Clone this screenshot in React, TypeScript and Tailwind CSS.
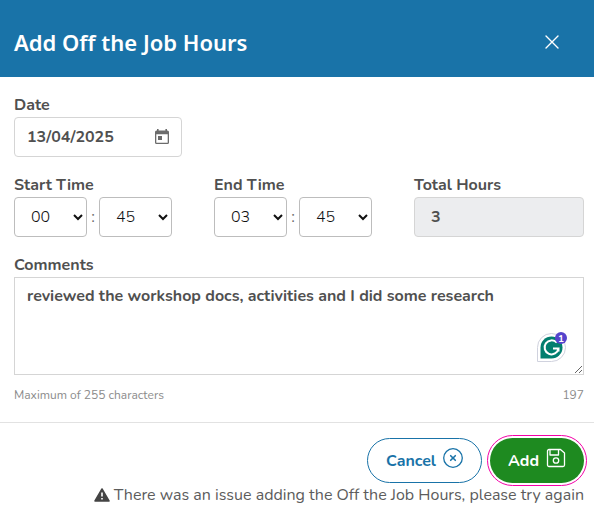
import { useState } from "react";

const FIELD = "h-10 rounded border text-base";
const LABEL = "block text-base leading-6 font-bold text-[#505050]";

function range(n: number) {
  return Array.from({ length: n }, (_, i) => String(i).padStart(2, "0"));
}

function TimeField({ label, id, hour, minute }: { label: string; id: string; hour: string; minute: string }) {
  const select = `${FIELD} w-[73px] border-[#bdbdbd] bg-white pl-3 font-light text-[#111]`;
  return (
    <div>
      <label htmlFor={id} className={LABEL}>{label}</label>
      <div className="flex items-center">
        <select id={id} defaultValue={hour} className={select}>
          {range(24).map((v) => <option key={v}>{v}</option>)}
        </select>
        <span className="w-3 text-center text-base text-[#666]">:</span>
        <select aria-label={`${label} minutes`} defaultValue={minute} className={select}>
          {range(60).map((v) => <option key={v}>{v}</option>)}
        </select>
      </div>
    </div>
  );
}

function CalendarIcon() {
  return (
    <svg viewBox="0 0 14 16" className="h-4 w-3.5" fill="#6b6b6b" aria-hidden="true">
      <path fillRule="evenodd" d="M2 0h1.600v1.600h6.800V0H12v1.600h.5A1.500 1.500 0 0 1 14 3.100v10.400a1.500 1.500 0 0 1-1.500 1.500h-11A1.500 1.500 0 0 1 0 13.500V3.100a1.500 1.500 0 0 1 1.500-1.500H2zM1.300 5.200v8.500h11.400V5.200zM3 7h4v4H3z" />
    </svg>
  );
}

function AssistantBadge() {
  return (
    <svg viewBox="0 0 32 32" className="absolute right-4 bottom-3 size-8" role="img" aria-label="1 writing suggestion">
      <path d="M1.500 30.500V16.500a14 14 0 1 1 14 14z" fill="#fff" stroke="#d0d2de" />
      <path d="M4.500 27.500V16.500a11 11 0 1 1 11 11z" fill="#027e6f" />
      <path d="M20.800 11.700A7 7 0 1 0 22.500 17.500H17M22.500 16.500V20.500" fill="none" stroke="#fff" strokeWidth="2" />
      <circle cx="25" cy="7" r="6" fill="#5543cc" />
      <text x="25" y="10.500" textAnchor="middle" fill="#fff" fontSize="10" fontWeight="700">1</text>
    </svg>
  );
}

export default function App() {
  const [date, setDate] = useState("13/04/2025");
  const [comments, setComments] = useState("reviewed the workshop docs, activities and I did some research");
  return (
    <form className="bg-white font-['Nunito','Open_Sans',sans-serif] text-[#505050]" onSubmit={(e) => e.preventDefault()}>
      <header className="flex h-[77px] items-center justify-between bg-[#1973a8] pt-1.5 pr-8 pl-3.5 text-white">
        <h1 className="font-['Noto_Sans',sans-serif] text-[22px] leading-8 font-semibold">Add Off the Job Hours</h1>
        <button type="button" aria-label="Close" className="flex size-5 items-center justify-center">
          <svg viewBox="0 0 14 14" className="size-3.5" stroke="currentColor" strokeWidth="1.4" strokeLinecap="round" aria-hidden="true">
            <path d="M1 1l12 12M13 1L1 13" />
          </svg>
        </button>
      </header>

      <div className="flex flex-col gap-4 border-b border-[#e2e2e2] pt-4 pr-2.5 pb-[17px] pl-3.5">
        <div>
          <label htmlFor="date" className={LABEL}>Date</label>
          <div className={`${FIELD} flex w-[168px] items-center border-[#d5d5d5] px-3`}>
            <input id="date" value={date} onChange={(e) => setDate(e.target.value)} className="min-w-0 flex-1 font-bold outline-none" />
            <button type="button" aria-label="Open calendar"><CalendarIcon /></button>
          </div>
        </div>
        <div className="grid grid-cols-3 gap-[30px]">
          <TimeField label="Start Time" id="start" hour="00" minute="45" />
          <TimeField label="End Time" id="end" hour="03" minute="45" />
          <div>
            <label htmlFor="total" className={LABEL}>Total Hours</label>
            <input id="total" disabled value="3" className={`${FIELD} w-full border-[#d5d5d5] bg-[#ecedef] px-4 font-bold`} />
          </div>
        </div>
        <div>
          <label htmlFor="comments" className={LABEL}>Comments</label>
          <div className="relative">
            <textarea id="comments" value={comments} onChange={(e) => setComments(e.target.value)} className="block h-[98px] w-full border border-[#d5d5d5] px-3 py-1.5 text-base leading-6 font-bold outline-none" />
            <AssistantBadge />
          </div>
          <div className="flex justify-between pt-2.5 text-xs leading-5 text-[#8c8c8c]">
            <p>Maximum of 255 characters</p>
            <p>197</p>
          </div>
        </div>
      </div>

      <footer className="px-2.5 pt-[15px]">
        <div className="flex justify-end gap-2">
          <button type="button" className="flex h-[45px] items-center gap-[7px] rounded-full border border-[#1973a8] px-[18px] text-base font-bold text-[#1973a8]">
            Cancel
            <svg viewBox="0 0 20 20" className="mb-1.5 size-5" fill="none" stroke="currentColor" strokeLinecap="round" aria-hidden="true">
              <circle cx="10" cy="10" r="9.3" strokeWidth="1.3" />
              <path d="M7.700 7.700l4.600 4.600M12.300 7.700l-4.600 4.600" strokeWidth="1.6" />
            </svg>
          </button>
          <button type="submit" className="flex h-[45px] items-center gap-[7px] rounded-full bg-[#1e8a20] px-[18px] text-base font-bold text-white outline-1 outline-offset-2 outline-[#f400a8]">
            Add
            <svg viewBox="0 0 20 20" className="mb-1.5 size-5" fill="none" stroke="currentColor" strokeWidth="1.3" strokeLinejoin="round" aria-hidden="true">
              <path d="M3 1.500h11.500l4 3.500v12a1.500 1.500 0 0 1-1.500 1.500H3A1.500 1.500 0 0 1 1.500 17V3A1.500 1.500 0 0 1 3 1.500zM4 1.500V7h8.500V1.500" />
              <circle cx="10" cy="12.500" r="2.700" />
            </svg>
          </button>
        </div>
        <p role="alert" className="flex items-center justify-end gap-1 text-base leading-6 text-[#5c5c5c]">
          <svg viewBox="0 0 16 14" className="h-3.5 w-4" aria-hidden="true">
            <path d="M8 1l7 12H1z" fill="#444" stroke="#444" strokeWidth="1.5" strokeLinejoin="round" />
            <path d="M8 4.500v4M8 10v1.600" stroke="#fff" strokeWidth="1.6" />
          </svg>
          There was an issue adding the Off the Job Hours, please try again
        </p>
      </footer>
    </form>
  );
}
